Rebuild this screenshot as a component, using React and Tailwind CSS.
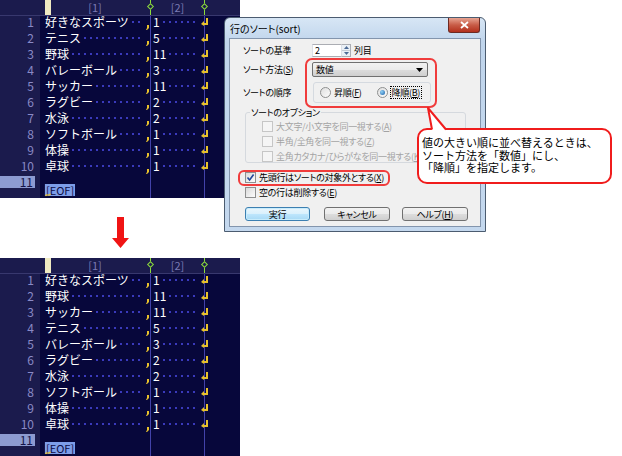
import React from "react";

const before = [
  ["好きなスポーツ", "1"],
  ["テニス", "5"],
  ["野球", "11"],
  ["バレーボール", "3"],
  ["サッカー", "11"],
  ["ラグビー", "2"],
  ["水泳", "2"],
  ["ソフトボール", "1"],
  ["体操", "1"],
  ["卓球", "1"],
];

const after = [
  ["好きなスポーツ", "1"],
  ["野球", "11"],
  ["サッカー", "11"],
  ["テニス", "5"],
  ["バレーボール", "3"],
  ["ラグビー", "2"],
  ["水泳", "2"],
  ["ソフトボール", "1"],
  ["体操", "1"],
  ["卓球", "1"],
];

const dots =
  "flex-1 h-[2px] bg-[linear-gradient(to_right,#3a3abc_2px,transparent_2px)] bg-[length:6px_2px] bg-repeat-x";

function Comma() {
  return (
    <svg width="3" height="5" viewBox="0 0 3 5" className="shrink-0 self-end -mb-[2px]">
      <path d="M1 0h2v3L1 5H0l1-2z" fill="#e8c22c" />
    </svg>
  );
}

function Return() {
  return (
    <svg width="7" height="8" viewBox="0 0 7 8" className="relative -mr-[4px] shrink-0">
      <path d="M5 0h2v7H2.5V5H5z" fill="#e8c22c" />
      <path d="M0 6l3-3v5z" fill="#e8c22c" />
    </svg>
  );
}

function Ruler() {
  return (
    <div className="flex h-4 shrink-0 border-b border-[#38386e] bg-[#1b1b4d] text-[11px] leading-none text-[#7a7ab4]">
      <div className="w-10 shrink-0" />
      <div className="relative flex w-[111px] shrink-0 items-center justify-center border-r border-[#8cdc3c]">
        <span className="absolute left-[5px] top-0 h-full w-[6px] bg-[#efeac2]" />
        [1]
        <span className="absolute -right-[3px] top-[4px] h-[5px] w-[5px] rotate-45 border border-[#8cdc3c] bg-[#1b1b4d]" />
      </div>
      <div className="relative flex w-[54px] shrink-0 items-center justify-center border-r border-[#8cdc3c]">
        [2]
        <span className="absolute -right-[3px] top-[4px] h-[5px] w-[5px] rotate-45 border border-[#8cdc3c] bg-[#1b1b4d]" />
      </div>
    </div>
  );
}

function Row({ n, name, value }) {
  return (
    <div className="flex h-4 shrink-0">
      <div className="w-10 shrink-0 bg-[#1b1b4d] pr-[6px] text-right text-[12px] leading-3 text-[#8a8ac6]">
        {n}
      </div>
      <div className="w-[111px] shrink-0 border-r border-[#4242aa] pl-[5px] pr-[1px]">
        <div className="flex h-3 items-center">
          <span className="whitespace-nowrap text-[12px] leading-3 text-white">{name}</span>
          <span className={`${dots} ml-[3px] mr-[2px]`} />
          <Comma />
        </div>
      </div>
      <div className="w-[54px] shrink-0 border-r border-[#4242aa] pl-[2px]">
        <div className="flex h-3 items-center">
          <span className="text-[12px] leading-3 text-white">{value}</span>
          <span className={`${dots} ml-[3px] mr-[2px]`} />
          <Return />
        </div>
      </div>
    </div>
  );
}

function Editor({ rows }) {
  return (
    <div className="flex h-[198px] w-[240px] flex-col overflow-hidden bg-[#07073b]">
      <Ruler />
      {rows.map(([name, value], i) => (
        <Row key={i} n={i + 1} name={name} value={value} />
      ))}
      {/* EOF line */}
      <div className="flex h-4 shrink-0">
        <div className="w-10 shrink-0 bg-[#1b1b4d]">
          <div className="h-3 w-[35px] bg-[#8d9bd1] pr-[2px] text-right text-[12px] leading-3 text-[#14144a]">
            11
          </div>
        </div>
        <div className="w-[111px] shrink-0 border-r border-[#4242aa] pl-[4px]">
          <span className="inline-block h-3 border-l border-[#14144a] bg-[#7d9de8] px-[1px] text-[11px] leading-3 text-[#0c0c46]">
            [EOF]
          </span>
        </div>
        <div className="w-[54px] shrink-0 border-r border-[#4242aa]" />
      </div>
      <div className="flex h-4 shrink-0">
        <div className="w-10 shrink-0 bg-[#1b1b4d]" />
        <div className="w-[111px] shrink-0 border-r border-[#4242aa] pl-[5px] pt-[1px]">
          <svg width="6" height="4" viewBox="0 0 6 4">
            <path d="M0.5 3C1.5 0.5 3 3.5 5.5 1" stroke="#e8c22c" strokeWidth="1.2" fill="none" />
          </svg>
        </div>
        <div className="w-[54px] shrink-0 border-r border-[#4242aa]" />
      </div>
    </div>
  );
}

function Check({ checked, disabled }) {
  return (
    <span
      className={
        disabled
          ? "relative inline-block h-[11px] w-[11px] shrink-0 border border-[#c6c6c6] bg-[#f5f5f5]"
          : "relative inline-block h-[11px] w-[11px] shrink-0 border border-[#8e8f8f] bg-[linear-gradient(135deg,#dadada,#fcfcfc)]"
      }
    >
      {checked && (
        <svg width="9" height="9" viewBox="0 0 9 9" className="absolute left-0 top-0">
          <path d="M1.5 4.5L3.6 7L7.6 1.5" stroke="#21469b" strokeWidth="1.6" fill="none" />
        </svg>
      )}
    </span>
  );
}

function Radio({ on }) {
  return (
    <span className="flex h-[11px] w-[11px] shrink-0 items-center justify-center rounded-full border border-[#8e8f8f] bg-[linear-gradient(135deg,#dedede,#fdfdfd)]">
      {on && (
        <span className="h-[5px] w-[5px] rounded-full bg-[radial-gradient(circle_at_35%_35%,#8fd0f5,#1b5fa8)]" />
      )}
    </span>
  );
}

const btn =
  "flex h-[14px] items-center justify-center rounded-[3px] border border-[#707070] bg-[linear-gradient(to_bottom,#f2f2f2,#ebebeb_50%,#dddddd_50%,#cfcfcf)]";

function Dialog() {
  return (
    <div className="absolute left-[224px] top-[17px] flex h-[215px] w-[262px] flex-col rounded-t-[6px] border border-[#4b5c70] bg-[linear-gradient(to_bottom,#d7e6f5,#c0d5ec_24px,#c4d8ee)] text-[9px] leading-none tracking-[-0.3px] text-black [font-feature-settings:'palt']">
      {/* title bar */}
      <div className="flex h-5 shrink-0 items-start justify-between pl-[5px]">
        <span className="mt-[6px] text-[10px] tracking-normal">行のソート(sort)</span>
        <div className="mr-[5px] flex h-[15px] w-[32px] items-center justify-center rounded-b-[3px] border border-t-0 border-[#6d2a22] bg-[linear-gradient(to_bottom,#e8a492,#c85c47_50%,#b3301c)]">
          <svg width="9" height="8" viewBox="0 0 9 8">
            <path d="M1 1L8 7M8 1L1 7" stroke="white" strokeWidth="1.8" />
          </svg>
        </div>
      </div>
      {/* client area */}
      <div className="relative mx-[4px] mb-[4px] flex-1 border border-[#8395ad] bg-[#f0f0f0]">
        <div className="mt-[5px] flex h-[13px] items-center pl-[13px]">
          <span className="w-[69px] shrink-0">ソートの基準</span>
          <div className="flex h-[13px] w-[30px] items-center border border-[#abadb3] border-x-[#dbdfe6] bg-white pl-[2px]">
            2
          </div>
          <div className="flex h-[13px] w-[9px] flex-col border border-l-0 border-[#abadb3] bg-[#eaf0f6]">
            <div className="flex flex-1 items-center justify-center border-b border-[#c5ccd6]">
              <svg width="5" height="3" viewBox="0 0 5 3">
                <path d="M0 3L2.5 0L5 3z" fill="#4d6b95" />
              </svg>
            </div>
            <div className="flex flex-1 items-center justify-center">
              <svg width="5" height="3" viewBox="0 0 5 3">
                <path d="M0 0L2.5 3L5 0z" fill="#4d6b95" />
              </svg>
            </div>
          </div>
          <span className="ml-[3px]">列目</span>
        </div>

        <div className="mt-[5px] flex h-[15px] items-center pl-[13px]">
          <span className="w-[69px] shrink-0 whitespace-nowrap">
            ソート方法(<span className="underline">S</span>)
          </span>
          <div className="flex h-[15px] w-[116px] items-center justify-between rounded-[2px] border border-[#707070] bg-[linear-gradient(to_bottom,#f2f2f2,#ebebeb_50%,#dddddd_50%,#cfcfcf)] pl-[3px] pr-[4px]">
            <span>数値</span>
            <svg width="7" height="4" viewBox="0 0 7 4">
              <path d="M0 0h7L3.5 4z" fill="black" />
            </svg>
          </div>
        </div>

        <div className="mt-[5px] flex h-[21px] items-center pl-[13px]">
          <span className="w-[70px] shrink-0">ソートの順序</span>
          <div className="flex h-[21px] w-[118px] shrink-0 items-center whitespace-nowrap rounded-[3px] border border-[#d5dae0] pl-[6px]">
            <Radio />
            <span className="ml-[3px] shrink-0">
              昇順(<span className="underline">F</span>)
            </span>
            <span className="ml-[15px] shrink-0">
              <Radio on />
            </span>
            <span className="ml-[2px] shrink-0 border border-dotted border-black px-[1px] py-[1px]">
              降順(<span className="underline">B</span>)
            </span>
          </div>
        </div>

        {/* options group */}
        <div className="relative ml-[15px] mt-[9px] h-[51px] w-[221px] rounded-[3px] border border-[#d5d9de] pl-[16px] pt-[6px] text-[#a3a3a3]">
          <span className="absolute -top-[5px] left-[4px] bg-[#f0f0f0] px-[1px] text-black">
            ソートのオプション
          </span>
          <div className="flex h-[15px] items-center gap-[3px] whitespace-nowrap">
            <Check disabled />
            <span>
              大文字/小文字を同一視する(<span className="underline">A</span>)
            </span>
          </div>
          <div className="flex h-[15px] items-center gap-[3px] whitespace-nowrap">
            <Check disabled />
            <span>
              半角/全角を同一視する(<span className="underline">Z</span>)
            </span>
          </div>
          <div className="flex h-[15px] items-center gap-[3px] whitespace-nowrap">
            <Check disabled />
            <span>
              全角カタカナ/ひらがなを同一視する(<span className="underline">K</span>)
            </span>
          </div>
        </div>

        <div className="mt-[7px] flex h-[15px] items-center gap-[3px] whitespace-nowrap pl-[15px]">
          <Check checked />
          <span>
            先頭行はソートの対象外とする(<span className="underline">X</span>)
          </span>
        </div>
        <div className="flex h-[15px] items-center gap-[3px] whitespace-nowrap pl-[15px]">
          <Check />
          <span>
            空の行は削除する(<span className="underline">E</span>)
          </span>
        </div>

        <div className="mt-[7px] flex pl-[15px]">
          <div className="flex h-[14px] w-[65px] items-center justify-center rounded-[3px] border border-[#3c7fb1] bg-[linear-gradient(to_bottom,#eaf6fd,#d9f0fc_50%,#bee6fd_50%,#a7d9f5)] shadow-[inset_0_0_0_1px_#c8ecfc]">
            実行
          </div>
          <div className={`${btn} ml-[14px] w-[66px]`}>キャンセル</div>
          <div className={`${btn} ml-[12px] w-[66px]`}>
            <span>
              ヘルプ(<span className="underline">H</span>)
            </span>
          </div>
        </div>

        {/* annotations */}
        <div className="absolute left-[75px] top-[19px] h-[50px] w-[132px] rounded-[7px] border-2 border-[#f03c3c]" />
        <div className="absolute left-[8px] top-[131px] h-[16px] w-[152px] rounded-[6px] border-2 border-[#f03c3c]" />
      </div>
    </div>
  );
}

function Callout() {
  return (
    <>
      <div className="absolute left-[417px] top-[128px] h-[56px] w-[195px] rounded-[10px] border-2 border-[#f01c1c] bg-white pl-[3px] pt-[6px] text-[11px] leading-[12.5px] text-black">
        <div>値の大きい順に並べ替えるときは、</div>
        <div>ソート方法を「数値」にし、</div>
        <div>「降順」を指定します。</div>
      </div>
      <svg width="32" height="30" viewBox="0 0 32 30" className="absolute left-[420px] top-[104px]">
        <path d="M8 4L12 26.5H26z" fill="white" />
        <path d="M12 25.5L8 4L26 25.5" stroke="#f01c1c" strokeWidth="2" fill="none" strokeLinejoin="round" />
      </svg>
    </>
  );
}

export default function App() {
  return (
    <div className="relative h-[456px] w-[622px] overflow-hidden bg-white font-['Noto_Sans_CJK_JP',sans-serif]">
      <Editor rows={before} />
      <div className="h-[60px] pl-[112px] pt-[19px]">
        <svg width="17" height="32" viewBox="0 0 17 32">
          <path d="M5 0h7v21h5L8.5 31L0 21h5z" fill="#f01414" />
        </svg>
      </div>
      <Editor rows={after} />
      <Dialog />
      <Callout />
    </div>
  );
}
